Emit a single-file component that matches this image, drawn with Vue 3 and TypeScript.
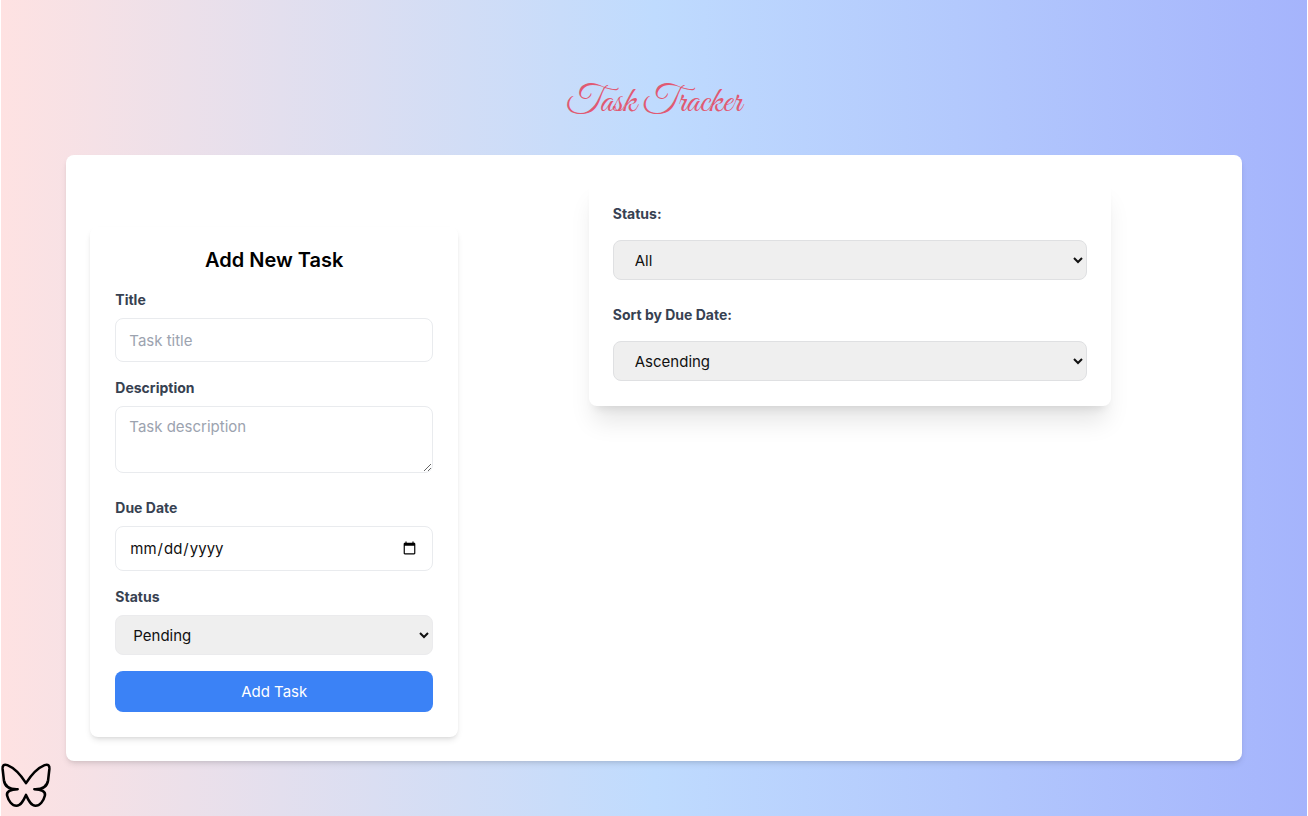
<script setup lang="ts">
import { reactive, ref } from 'vue'

interface Task {
  title: string
  description: string
  dueDate: string
  status: string
}

const statuses: string[] = ['Pending', 'In Progress', 'Completed']
const draft = reactive<Task>({ title: '', description: '', dueDate: '', status: 'Pending' })
const tasks = ref<Task[]>([])
const filterStatus = ref('All')
const sortOrder = ref('Ascending')

function addTask(): void {
  if (!draft.title) return
  tasks.value.push({ ...draft })
  draft.title = ''
  draft.description = ''
  draft.dueDate = ''
  draft.status = 'Pending'
}
</script>

<template>
  <div class="page">
    <h1 class="brand">Task Tracker</h1>
    <main class="board">
      <form class="task-form" @submit.prevent="addTask">
        <h2>Add New Task</h2>
        <div class="field">
          <label for="title">Title</label>
          <input id="title" v-model="draft.title" type="text" placeholder="Task title" />
        </div>
        <div class="field description">
          <label for="description">Description</label>
          <textarea id="description" v-model="draft.description" placeholder="Task description"></textarea>
        </div>
        <div class="field">
          <label for="due">Due Date</label>
          <input id="due" v-model="draft.dueDate" type="date" />
        </div>
        <div class="field">
          <label for="status">Status</label>
          <select id="status" v-model="draft.status">
            <option v-for="s in statuses" :key="s">{{ s }}</option>
          </select>
        </div>
        <button type="submit">Add Task</button>
      </form>
      <section class="results">
        <div class="filters">
          <div class="filter">
            <label for="filter-status">Status:</label>
            <select id="filter-status" v-model="filterStatus">
              <option>All</option>
              <option v-for="s in statuses" :key="s">{{ s }}</option>
            </select>
          </div>
          <div class="filter">
            <label for="sort">Sort by Due Date:</label>
            <select id="sort" v-model="sortOrder">
              <option>Ascending</option>
              <option>Descending</option>
            </select>
          </div>
        </div>
      </section>
    </main>
    <svg class="butterfly" viewBox="0 0 156 138" aria-hidden="true">
      <path
        d="M78 63C62 38 42 16 20 7C9 3 4 8 5 19L9 54C12 74 25 83 52 82C30 83 16 89 19 102C23 119 35 134 48 134C62 134 70 118 78 100C86 118 94 134 108 134C121 134 133 119 137 102C140 89 126 83 104 82C131 83 144 74 147 54L151 19C152 8 147 3 136 7C114 16 94 38 78 63Z"
      />
    </svg>
  </div>
</template>

<style>
body {
  margin: 0;
}
</style>

<style scoped>
.page,
.page * {
  box-sizing: border-box;
}
.page {
  position: relative;
  min-height: 100vh;
  margin: 0 1px;
  padding: 79px 0 55px;
  background: linear-gradient(to right, #fee2e2, #bfdbfe, #a5b4fc);
  font-family: Inter, "Liberation Sans", sans-serif;
  font-size: 15px;
  line-height: 24px;
}
.brand {
  margin: 0 0 28px;
  text-align: center;
  font-family: "Great Vibes", "Liberation Serif", cursive;
  font-size: 37px;
  line-height: 48px;
  font-weight: 400;
  color: #e05a73;
}
.board {
  display: grid;
  grid-template-columns: 1fr 2fr;
  align-items: start;
  gap: 24px;
  width: 90%;
  margin: 0 auto;
  padding: 24px;
  border-radius: 8px;
  background: #fff;
  box-shadow: 0 4px 6px -1px rgba(0, 0, 0, 0.1), 0 2px 4px -2px rgba(0, 0, 0, 0.1);
}
.task-form {
  margin-top: 48px;
  padding: 19px 25px 25px;
  border-radius: 8px;
  box-shadow: 0 4px 6px -1px rgba(0, 0, 0, 0.1), 0 2px 4px -2px rgba(0, 0, 0, 0.1);
}
h2 {
  margin: 0 0 16px;
  text-align: center;
  font-size: 20px;
  line-height: 28px;
  font-weight: 600;
  color: #000;
}
.field {
  margin-bottom: 16px;
}
.field.description {
  margin-bottom: 25px;
}
label {
  display: block;
  margin-bottom: 8px;
  font-size: 14px;
  line-height: 20px;
  font-weight: 700;
  color: #374151;
}
input,
textarea,
select,
button {
  display: block;
  width: 100%;
  margin: 0;
  font: inherit;
  color: #111;
  border-radius: 8px;
}
input,
textarea {
  padding: 8px 13px;
  border: 1px solid #e9ebee;
  background: #fff;
}
input {
  height: 44px;
}
input[type="date"] {
  height: 45px;
}
textarea {
  height: 67px;
  resize: vertical;
}
input::placeholder,
textarea::placeholder {
  color: #9ca3af;
}
select {
  height: 40px;
  padding: 0 0 0 13px;
  border: 1px solid #ebebed;
  background: #efefef;
}
button {
  height: 41px;
  border: 0;
  background: #3b82f6;
  color: #fff;
}
.filters {
  width: 71%;
  margin: 0 auto;
  padding: 25px 24px;
  border-radius: 8px;
  box-shadow: 0 20px 25px -5px rgba(0, 0, 0, 0.1), 0 8px 10px -6px rgba(0, 0, 0, 0.1);
}
.filter + .filter {
  margin-top: 25px;
}
.filter label {
  margin-bottom: 16px;
}
.filter select {
  padding: 0 0 0 17px;
  border-color: #dfe0e2;
}
.butterfly {
  position: absolute;
  left: 0;
  bottom: 8px;
  width: 50px;
  height: 46px;
  fill: none;
  stroke: #000;
  stroke-width: 8;
  stroke-linejoin: round;
}
</style>
